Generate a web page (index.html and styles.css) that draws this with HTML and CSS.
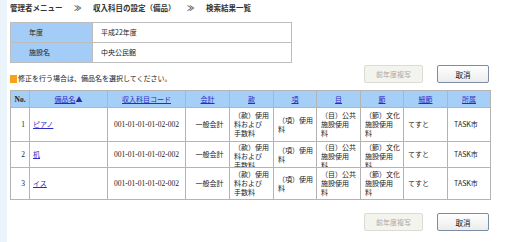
FILE: index.html
```html
<!DOCTYPE html>
<html lang="ja">
<head>
<meta charset="utf-8">
<link rel="stylesheet" href="styles.css">
</head>
<body>
<div class="page">
  <div class="side"></div>
  <div class="main">
    <div class="crumb">管理者メニュー<span class="sep">≫</span>収入科目の設定（備品）<span class="sep">≫</span>検索結果一覧</div>
    <table class="info">
      <tr><th>年度</th><td>平成22年度</td></tr>
      <tr><th>施設名</th><td>中央公民館</td></tr>
    </table>
    <div class="bar">
      <div class="msg"><span class="mark"></span>修正を行う場合は、備品名を選択してください。</div>
      <div class="btns">
        <button class="btn btn-off" disabled>前年度複写</button>
        <button class="btn btn-main">取消</button>
      </div>
    </div>
    <table class="list">
      <colgroup>
        <col class="c-no"><col class="c-name"><col class="c-code"><col class="c-w">
        <col class="c-w"><col class="c-w2"><col class="c-w"><col class="c-w2"><col class="c-w"><col>
      </colgroup>
      <tr class="head">
        <th class="no">No.</th>
        <th><a href="#">備品名</a>▲</th>
        <th><a href="#">収入科目コード</a></th>
        <th><a href="#">会計</a></th>
        <th><a href="#">款</a></th>
        <th><a href="#">項</a></th>
        <th><a href="#">目</a></th>
        <th><a href="#">節</a></th>
        <th><a href="#">細節</a></th>
        <th><a href="#">所属</a></th>
      </tr>
      <tr class="r1">
        <td class="num">1</td>
        <td class="name"><a href="#">ピアノ</a></td>
        <td class="code">001-01-01-01-02-002</td>
        <td class="center">一般会計</td>
        <td>（款）使用<br>料および<br>手数料</td>
        <td>（項）使用<br>料</td>
        <td>（目）公共<br>施設使用<br>料</td>
        <td>（節）文化<br>施設使用<br>料</td>
        <td>てすと</td>
        <td class="own">TASK市</td>
      </tr>
      <tr class="r2">
        <td class="num">2</td>
        <td class="name"><a href="#">机</a></td>
        <td class="code">001-01-01-01-02-002</td>
        <td class="center">一般会計</td>
        <td><div class="clip">（款）使用<br>料および<br>手数料</div></td>
        <td>（項）使用<br>料</td>
        <td><div class="clip">（目）公共<br>施設使用<br>料</div></td>
        <td><div class="clip">（節）文化<br>施設使用<br>料</div></td>
        <td>てすと</td>
        <td class="own">TASK市</td>
      </tr>
      <tr class="r3">
        <td class="num">3</td>
        <td class="name"><a href="#">イス</a></td>
        <td class="code">001-01-01-01-02-002</td>
        <td class="center">一般会計</td>
        <td>（款）使用<br>料および<br>手数料</td>
        <td>（項）使用<br>料</td>
        <td>（目）公共<br>施設使用<br>料</td>
        <td>（節）文化<br>施設使用<br>料</td>
        <td>てすと</td>
        <td class="own">TASK市</td>
      </tr>
    </table>
    <div class="bar bar-bottom">
      <div class="btns">
        <button class="btn btn-off" disabled>前年度複写</button>
        <button class="btn btn-main">取消</button>
      </div>
    </div>
  </div>
</div>
</body>
</html>
```
FILE: styles.css
```css
html, body {
  margin: 0;
  padding: 0;
  background: #fff;
}
body {
  font-family: "Noto Sans CJK JP", "Noto Sans", sans-serif;
  font-size: 7px;
  color: #1a1a1a;
}
.page {
  display: flex;
  min-height: 242px;
}
.side {
  width: 7px;
  background: #ebf3fb;
  flex: none;
}
.main {
  padding-left: 3px;
  width: 481px;
}
.crumb {
  font-weight: bold;
  font-size: 7.5px;
  line-height: 10px;
  padding-top: 3px;
  margin-bottom: 9px;
  color: #333;
  white-space: nowrap;
}
.sep {
  margin: 0 11.5px;
}
.info {
  border-collapse: collapse;
  width: 282px;
}
.info th, .info td {
  border: 1px solid #bdbdbd;
  height: 19px;
  padding: 0;
  line-height: 9px;
  text-align: left;
  font-weight: normal;
}
.info th {
  width: 63px;
  padding-left: 18px;
  background: #a3cdf6;
  color: #222;
}
.info td {
  padding-left: 8px;
  color: #222;
}
.bar {
  display: flex;
  justify-content: space-between;
  align-items: flex-end;
  margin-top: 2px;
  margin-bottom: 7px;
}
.bar-bottom {
  justify-content: flex-end;
  margin-top: 13px;
}
.msg {
  display: flex;
  align-items: center;
  line-height: 9px;
  color: #222;
}
.mark {
  width: 7px;
  height: 8px;
  background: #f7a21a;
  margin-right: 1px;
}
.btns {
  display: flex;
  gap: 14px;
  margin-right: 2px;
}
.btn {
  height: 18px;
  padding: 0;
  font-family: "Noto Sans CJK JP", sans-serif;
  font-size: 7px;
  border-radius: 2px;
}
.btn-off {
  width: 59px;
  background: #f4f4ef;
  border: 1px solid #dcdcd4;
  color: #a8a8a8;
}
.btn-main {
  width: 52px;
  background: linear-gradient(#ffffff, #ececec);
  border: 1px solid #7c8ca2;
  color: #111;
  font-size: 7.5px;
}
.list {
  border-collapse: collapse;
  width: 481px;
  table-layout: fixed;
}
.c-no { width: 19px; }
.c-name { width: 78px; }
.c-code { width: 78px; }
.c-w { width: 44px; }
.c-w2 { width: 43px; }
.list th, .list td {
  border: 1px solid #b4b4b4;
  padding: 0 0 0 4px;
  line-height: 9px;
  text-align: left;
  vertical-align: middle;
}
.list th {
  background: #a6cff7;
  height: 16px;
  padding: 0;
  text-align: center;
  font-weight: normal;
  color: #2a2ab0;
}
.list a {
  color: #2b2bc4;
  text-decoration: underline;
}
.list th.no {
  font-family: "Liberation Serif", serif;
  font-weight: bold;
  color: #222;
  font-size: 7.5px;
}
.r1 td { height: 33px; }
.r2 td { height: 25px; }
.r3 td { height: 31px; }
.list td.num {
  font-family: "Liberation Serif", serif;
  text-align: right;
  padding: 0 4px 0 0;
  font-size: 7.5px;
}
.list td.name {
  padding-left: 3px;
}
.list td.code {
  font-family: "Liberation Serif", serif;
  font-size: 7.5px;
  text-align: center;
  padding: 0;
}
.list td.center {
  text-align: center;
  padding: 0 0 0 4px;
}
.list td.own {
  padding-left: 6px;
}
.clip {
  height: 24px;
  overflow: hidden;
}
```
